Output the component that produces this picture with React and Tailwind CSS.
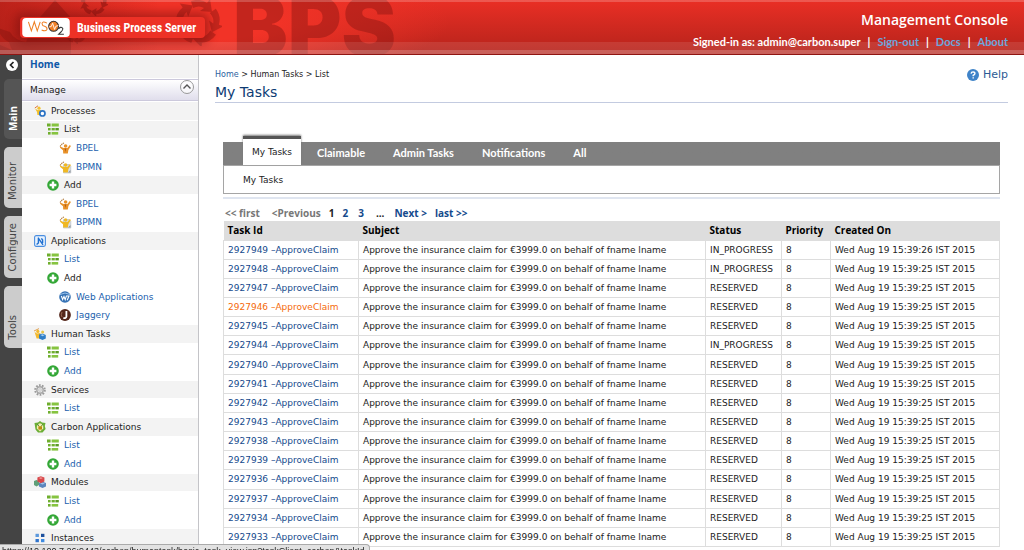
import React from "react";

const subject = "Approve the insurance claim for €3999.0 on behalf of fname lname";
const tasks = [
  ["2927949", "IN_PROGRESS", "26"],
  ["2927948", "IN_PROGRESS", "25"],
  ["2927947", "RESERVED", "25"],
  ["2927946", "RESERVED", "25"],
  ["2927945", "RESERVED", "25"],
  ["2927944", "IN_PROGRESS", "25"],
  ["2927940", "RESERVED", "25"],
  ["2927941", "RESERVED", "25"],
  ["2927942", "RESERVED", "25"],
  ["2927943", "RESERVED", "25"],
  ["2927938", "RESERVED", "25"],
  ["2927939", "RESERVED", "25"],
  ["2927936", "RESERVED", "25"],
  ["2927937", "RESERVED", "25"],
  ["2927934", "RESERVED", "25"],
  ["2927933", "RESERVED", "25"],
];

// [icon, label, depth, isLink]
const menu = [
  ["process", "Processes", 0, false],
  ["list", "List", 1, false],
  ["bpel", "BPEL", 2, true],
  ["bpmn", "BPMN", 2, true],
  ["add", "Add", 1, false],
  ["bpel", "BPEL", 2, true],
  ["bpmn", "BPMN", 2, true],
  ["app", "Applications", 0, false],
  ["list", "List", 1, true],
  ["add", "Add", 1, false],
  ["web", "Web Applications", 2, true],
  ["jaggery", "Jaggery", 2, true],
  ["human", "Human Tasks", 0, false],
  ["list", "List", 1, true],
  ["add", "Add", 1, true],
  ["gear", "Services", 0, false],
  ["list", "List", 1, true],
  ["carbon", "Carbon Applications", 0, false],
  ["list", "List", 1, true],
  ["add", "Add", 1, true],
  ["modules", "Modules", 0, false],
  ["list", "List", 1, true],
  ["add", "Add", 1, true],
  ["instances", "Instances", 0, false],
];

const person = (
  <>
    <path d="M1 4.5 L3.5 1.5 L5 1" fill="none" stroke="#b07a3c" strokeWidth="1.1" strokeDasharray="1.5 .6" />
    <circle cx="6.6" cy="4" r="1.8" />
    <path d="M1.2 4.6 L4.6 6 H8.4 L10.8 3 L11.9 4 L9.4 8 L8.8 11.6 H4.2 L4 8.2 L1 5.8Z" />
  </>
);

const drawings = {
  list: (
    <g fill="#6fae2e">
      <rect x="0" y="0.5" width="3.6" height="3" /><rect x="4.6" y="0.5" width="7.2" height="3" fill="#86c440" />
      <rect x="1" y="5" width="2.6" height="2.4" /><rect x="4.6" y="5" width="3.2" height="2.4" /><rect x="8.4" y="5" width="3.4" height="2.4" fill="#5a9a24" />
      <rect x="1" y="9" width="2.6" height="2.6" /><rect x="4.6" y="9" width="6.6" height="2.6" fill="#86c440" />
    </g>
  ),
  add: (
    <>
      <circle cx="6" cy="6" r="5.8" fill="#33a736" />
      <path d="M6 2.6V9.4M2.6 6H9.4" stroke="#fff" strokeWidth="2.4" />
    </>
  ),
  bpel: <g fill="#e8922a">{person}<path d="M5.6 6.5 L6.4 10 L7.2 6.5Z" fill="#b35a14" /></g>,
  bpmn: (
    <>
      <path d="M4.5 3.5H10L11.8 5.5V12H4.5Z" fill="#d9dde2" stroke="#b4b9c0" strokeWidth=".6" />
      <g fill="#f0b823">{person}</g>
      <path d="M9 11.5 L11.5 9V11.5Z" fill="#8e959d" />
    </>
  ),
  process: (
    <>
      <g fill="#f3c12d"><path d="M.8 3 L4 .8" stroke="#e0793a" strokeWidth="1" /><circle cx="5" cy="3.2" r="1.6" /><path d="M1 3.6 L3.6 5 H7 L8 10 H3.4 L3 7Z" /></g>
      <circle cx="8.4" cy="8.4" r="2.6" fill="#fff" stroke="#2b73c4" strokeWidth="1.7" />
    </>
  ),
  human: (
    <>
      <path d="M0 3 L5 .6" stroke="#e0a050" strokeWidth="1" />
      <g fill="#f3b92d"><circle cx="3.8" cy="3.4" r="1.6" /><path d="M.6 4 L3 5.4 L6.4 5 V10.6 H2.6Z" /></g>
      <path d="M5 6.4 L8.5 5.4 L11.8 7 V10.4 L8.5 12 L5 10.6Z" fill="#2f7ec7" />
      <path d="M6.5 7 L8.5 6.3 L10.5 7.2 L8.5 8.2Z" fill="#a9d1f2" />
      <circle cx="8.6" cy="4" r="1.5" fill="#e9c648" />
    </>
  ),
  app: (
    <>
      <rect x=".6" y=".6" width="10.8" height="10.8" rx="1.6" fill="#e8f2fd" stroke="#4a8ee0" strokeWidth="1.1" />
      <path d="M4 2.6 L9 9.8 M4.4 3 V8 L2.6 9.6 M7.4 3.4 L8.6 5 V8" fill="none" stroke="#1f6fd0" strokeWidth="1.4" />
    </>
  ),
  web: (
    <>
      <circle cx="6" cy="6" r="5.8" fill="#3572b5" />
      <path d="M1 3.5 Q6 .5 11 3.5" stroke="#9cc3ea" fill="none" />
      <path d="M2.4 5 L3.6 8.6 L5 5.5 L6.2 8.6 L7.4 5 H10 L8.2 9.2" fill="none" stroke="#fff" strokeWidth="1.1" />
    </>
  ),
  jaggery: (
    <>
      <circle cx="6" cy="6" r="5.9" fill="#54261a" />
      <path d="M7.4 2V7.6 Q7 9.6 4.4 9" fill="none" stroke="#fff" strokeWidth="1.8" />
      <path d="M3 3 Q1.6 6 3 8" fill="none" stroke="#a87862" strokeWidth=".8" />
    </>
  ),
  gear: (
    <>
      <circle cx="6" cy="6" r="4.8" fill="none" stroke="#9a9a9a" strokeWidth="2" strokeDasharray="1.7 1.3" />
      <circle cx="6" cy="6" r="3.2" fill="#e4e4e4" stroke="#a8a8a8" strokeWidth="1.4" />
      <circle cx="6" cy="6" r="1.2" fill="#fff" stroke="#999" strokeWidth=".5" />
    </>
  ),
  carbon: (
    <>
      <path d="M.5 2 L4 1.5 L6 0 L8 1.5 L11.5 2 L10.8 5 L11.6 8 L8.5 11.6 H4 L1.5 8.5Z" fill="#6aae35" />
      <path d="M3 3.5 L6 2.2 L9 3.5 L9.4 7.5 L6 10.5 L2.8 7.5Z" fill="#f3efb0" />
      <rect x="4.4" y="5.2" width="3.6" height="3.4" fill="#b98a12" />
      <path d="M3 3.5 L5 4.5 M9 3.5 L7.4 4.5" stroke="#2f7a1c" strokeWidth="1" />
    </>
  ),
  modules: (
    <>
      <path d="M0 5 L2.5 4 L5 5 V9 L2.5 10.4 L0 9Z" fill="#5f9f78" />
      <path d="M5 7 L8.5 5.8 L12 7 V10.4 L8.5 12 L5 10.6Z" fill="#5b86bd" />
      <path d="M3.4 1.6 L6.8 .2 L10.4 1.6 V5.6 L6.8 7.2 L3.4 5.6Z" fill="#d8474a" />
      <path d="M4.6 2 L6.8 1.2 L9 2 L6.8 3Z" fill="#f09a98" />
      <path d="M6 7.6 L8.5 6.8 L11 7.6 L8.5 8.6Z" fill="#a6c3e6" />
    </>
  ),
  instances: (
    <>
      <rect x="1.5" y="1.8" width="3.4" height="3.2" fill="#5b98dc" /><rect x="7" y="1.8" width="3.4" height="3.2" fill="#1c4f9c" />
      <rect x="1.5" y="7" width="3.4" height="3.2" fill="#2f74cc" /><rect x="7" y="7" width="3.4" height="3.2" fill="#3d8ae0" />
    </>
  ),
};

function Icon({ name }) {
  return <svg viewBox="0 0 12 12" className="size-3 shrink-0 overflow-visible" aria-hidden="true">{drawings[name]}</svg>;
}

function CycleArrows({ className }) {
  return (
    <svg viewBox="0 0 48 48" className={className} aria-hidden="true" fill="#8e1712">
      {[0, 72, 144, 216, 288].map((a) => (
        <path key={a} transform={`rotate(${a} 24 24)`} d="M17 3 Q26 0 33 5 L36 1 L38 14 L26 13 L30 10 Q25 7 19 10Z" />
      ))}
    </svg>
  );
}

function Header() {
  return (
    <header className="relative flex h-[55px] shrink-0 justify-between overflow-hidden border-b border-[#8f1512] bg-linear-to-b from-[#ea2f25] to-[#b5231b]">
      <div className="absolute inset-y-0 left-0 w-full bg-[radial-gradient(ellipse_250px_60px_at_200px_22px,#f23327_30%,transparent)]" />
      <div className="absolute inset-y-0 left-0 w-40 bg-linear-to-r from-[#a81c15]/70 to-transparent" />
      <svg viewBox="0 0 72 55" className="absolute left-0 top-0 h-[55px] w-[72px]" fill="#8e1712" opacity=".5" aria-hidden="true">
        <path d="M55 0 L80 28 H71 V55 H0 V45 L12 50 L9 42 Q0 38 -2 28 L10 32 Q14 40 26 42 L34 24Z" />
      </svg>
      <CycleArrows className="absolute -top-3 left-20 size-7 opacity-60" />
      <CycleArrows className="absolute left-16 top-5 size-6 opacity-50" />
      <CycleArrows className="absolute -top-0.5 left-[174px] size-12 opacity-45" />
      <div aria-hidden="true" className="absolute left-[233px] top-0 font-[Inter,sans-serif] text-[82px]/[54px] font-black text-[#7e120e]/40 select-none">BPS</div>
      <div className="absolute inset-x-0 top-0 h-0.5 bg-white/20" />
      <div className="absolute inset-x-0 bottom-0 h-3 bg-white/10" />
      <div className="absolute inset-x-0 bottom-0 h-1 bg-white/20" />
      <div className="relative ml-5 mt-[17px] flex h-[21px] w-[185px] items-center self-start rounded bg-[#ed3126] shadow-[0_0_10px_5px_rgba(110,10,10,0.45)]">
        <svg viewBox="0 0 50 20" className="ml-px h-[19px] w-[50px] shrink-0" role="img" aria-label="WSO2">
          <rect width="50" height="20" rx="4" fill="#fff" />
          <path d="M6.5 4 L9.6 13.5 L12.7 4 L15.8 13.5 L18.9 4 M26 5.4 Q21 2.8 20.8 6 Q21 8.2 23.6 8.8 Q26.6 10 26 12 Q24.6 14.6 20.4 12.6" fill="none" stroke="#ee7f22" strokeWidth="1.1" />
          <circle cx="33" cy="8.7" r="5.2" fill="#f07f24" stroke="#332c2a" strokeWidth="1.1" />
          <path d="M28 9.5 L30.5 9 L32 5.5 L34 12 L35.4 8.6 L38 8" fill="none" stroke="#fff" strokeWidth=".9" />
          <path d="M38 11.4 Q40.4 8.6 42.6 10.8 Q43.6 12.4 38.4 17 H43.8" fill="none" stroke="#333" strokeWidth="1.1" />
        </svg>
        <span className="ml-1.5 whitespace-nowrap font-['Roboto_Condensed',Roboto,sans-serif] text-[12px]/4 font-bold text-white">Business Process Server</span>
      </div>
      <div className="relative mr-4 flex flex-col items-end pt-2.5 text-white">
        <h1 className="font-['Open_Sans',sans-serif] text-sm/5 font-semibold">Management Console</h1>
        <div className="mt-1 flex gap-[7px] font-[Lato,sans-serif] text-[11px]/4 font-bold">
          <span>Signed-in as: admin@carbon.super</span>
          <span>|</span><a href="#signout" className="text-[#6da6dc]">Sign-out</a>
          <span>|</span><a href="#docs" className="text-[#6da6dc]">Docs</a>
          <span>|</span><a href="#about" className="text-[#6da6dc]">About</a>
        </div>
      </div>
    </header>
  );
}

function Rail() {
  const tab = "flex w-[18px] items-center justify-center rounded-l-[5px] text-[10px]";
  return (
    <nav className="flex w-[22px] shrink-0 flex-col items-end gap-2 bg-[#444] pt-1">
      <button aria-label="Collapse" className="mr-1 flex size-3 items-center justify-center rounded-full bg-white">
        <svg viewBox="0 0 10 10" className="size-2.5"><path d="M6.5 2 L3.5 5 L6.5 8" fill="none" stroke="#222" strokeWidth="1.7" /></svg>
      </button>
      <button className={`${tab} h-[60px] bg-[#555] pt-5 font-['Open_Sans',sans-serif] font-bold text-white`}><span className="rotate-180 [writing-mode:vertical-rl]">Main</span></button>
      <button className={`${tab} h-[61px] bg-[#ccc] pt-2 text-[#444]`}><span className="rotate-180 [writing-mode:vertical-rl]">Monitor</span></button>
      <button className={`${tab} h-[62px] bg-[#ccc] text-[#444]`}><span className="rotate-180 [writing-mode:vertical-rl]">Configure</span></button>
      <button className={`${tab} h-[62px] bg-[#ccc] pt-5 text-[#444]`}><span className="rotate-180 [writing-mode:vertical-rl]">Tools</span></button>
    </nav>
  );
}

const indents = ["pl-3", "pl-[25px]", "pl-[37px]"];

function Sidebar() {
  return (
    <aside className="w-[177px] shrink-0 border-r border-[#c4c4c8] bg-white">
      <div className="flex h-[23px] items-center bg-[#f3f3f3] px-2 pb-1.5 font-['Open_Sans',sans-serif] text-[10px] font-bold"><a href="#home" className="text-[#0f58a8]">Home</a></div>
      <div className="mt-px flex h-[22px] items-center justify-between border-y border-[#ccc9dc] bg-linear-to-b from-white to-[#e0deec] px-2">
        <span>Manage</span>
        <button aria-label="Toggle Manage" className="-mr-1 mb-1.5 flex size-[14px] items-center justify-center rounded-full border border-[#999] bg-white/60">
          <svg viewBox="0 0 10 10" className="size-2.5"><path d="M1.5 6.5 L5 3 L8.5 6.5" fill="none" stroke="#555" strokeWidth="1.4" /></svg>
        </button>
      </div>
      <ul className="mt-px grid h-[446px] auto-rows-fr">
        {menu.map(([icon, label, depth, link], i) => (
          <li key={i} className={`flex items-center gap-[5px] border-b border-white ${indents[depth]} ${link || i === 9 ? "" : "bg-[#f3f3f3]"}`}>
            <Icon name={icon} />
            {link ? <a href={`#${label}`} className="text-[#1b5fae]">{label}</a> : <span className="text-[#222]">{label}</span>}
          </li>
        ))}
      </ul>
    </aside>
  );
}

function TaskTable() {
  const cell = "border border-[#ddd] px-1 py-0 whitespace-nowrap";
  return (
    <table className="h-[326px] w-full border-collapse text-left leading-3 text-[#222]">
      <thead>
        <tr className="h-[19px] bg-[#ddd] font-['Open_Sans',sans-serif] text-[10px] text-black">
          <th className="w-[135px] px-1 py-0">Task Id</th>
          <th className="px-1 py-0">Subject</th>
          <th className="w-[76px] px-1 py-0">Status</th>
          <th className="w-[49px] px-1 py-0">Priority</th>
          <th className="w-[169px] px-1 py-0">Created On</th>
        </tr>
      </thead>
      <tbody>
        {tasks.map(([id, status, sec]) => (
          <tr key={id}>
            <td className={cell}><a href={`#${id}`} className={id === "2927946" ? "text-[#f56a0a]" : "text-[#144a8c]"}>{id} –ApproveClaim</a></td>
            <td className={cell}>{subject}</td>
            <td className={cell}>{status}</td>
            <td className={cell}>8</td>
            <td className={cell}>Wed Aug 19 15:39:{sec} IST 2015</td>
          </tr>
        ))}
      </tbody>
    </table>
  );
}

function Content() {
  const link = "text-[#144a8c]";
  return (
    <main className="min-w-0 flex-1 bg-white px-4 pt-3">
      <div className="flex items-start justify-between">
        <nav className="pt-0.5 text-[8px]/3">
          <a href="#home" className="text-[#2d5f9e]">Home</a> &gt; Human Tasks &gt; List
        </nav>
        <a href="#help" className="flex items-center gap-1 text-[11px]/4 text-[#2b5a94]">
          <svg viewBox="0 0 12 12" className="size-3"><circle cx="6" cy="6" r="6" fill="#3f83c8" /><path d="M4.1 4.6 Q4.3 2.9 6.1 2.9 Q8 3 7.9 4.6 Q7.8 5.6 6.2 6.3 V7.2 M6.2 8.2V9.6" fill="none" stroke="#fff" strokeWidth="1.4" /></svg>
          Help
        </a>
      </div>
      <h2 className="mt-px border-b border-[#c3cbe0] pb-0.5 text-sm/4 text-[#0d3b73]">My Tasks</h2>
      <div className="mt-[33px] px-2">
        <div className="flex h-[29px] items-end gap-7 bg-linear-to-b from-transparent from-20% to-[#808080] to-20% pl-5 font-[Lato,sans-serif] text-[11px] font-bold text-white">
          <button className="-mr-3 h-[29px] w-[58px] border-t-[3px] border-[#555] bg-white font-['DejaVu_Sans',sans-serif] text-[9px] font-normal text-[#222] shadow-[0_-1px_2px_#777]">My Tasks</button>
          <button className="h-6">Claimable</button>
          <button className="h-6">Admin Tasks</button>
          <button className="h-6">Notifications</button>
          <button className="h-6">All</button>
        </div>
        <div className="flex h-[29px] items-center border border-[#a5a5a5] pl-[19px] text-[#222]">My Tasks</div>
        <div className="mt-[3px] h-0.5 bg-[#dfe5f0]" />
        <div className="flex h-[22px] items-end pl-0.5 font-['Open_Sans',sans-serif] text-[10px]/4 font-bold">
          <span className="text-[#777]">&lt;&lt; first</span>
          <span className="ml-3 text-[#777]">&lt;Previous</span>
          <span className="ml-2">1</span>
          <a href="#2" className={`ml-2 ${link}`}>2</a>
          <a href="#3" className={`ml-2.5 ${link}`}>3</a>
          <span className="ml-3">...</span>
          <a href="#next" className={`ml-2.5 ${link}`}>Next &gt;</a>
          <a href="#last" className={`ml-2 ${link}`}>last &gt;&gt;</a>
        </div>
        <TaskTable />
      </div>
    </main>
  );
}

export default function App() {
  return (
    <div className="flex h-screen flex-col overflow-hidden bg-white font-['DejaVu_Sans',sans-serif] text-[9px]/3 text-[#222]">
      <Header />
      <div className="flex min-h-0 flex-1">
        <Rail />
        <Sidebar />
        <Content />
      </div>
      <div className="fixed bottom-0 left-0 h-1.5 w-[370px] overflow-hidden whitespace-nowrap rounded-tr-sm border-r border-t border-[#aaa] bg-[#e2e2e2] pl-0.5 font-['Liberation_Sans',sans-serif] text-[9px]/3">https://10.100.7.26:9443/carbon/humantask/basic_task_view.jsp?taskClient=carbon&amp;taskId=9002</div>
    </div>
  );
}
